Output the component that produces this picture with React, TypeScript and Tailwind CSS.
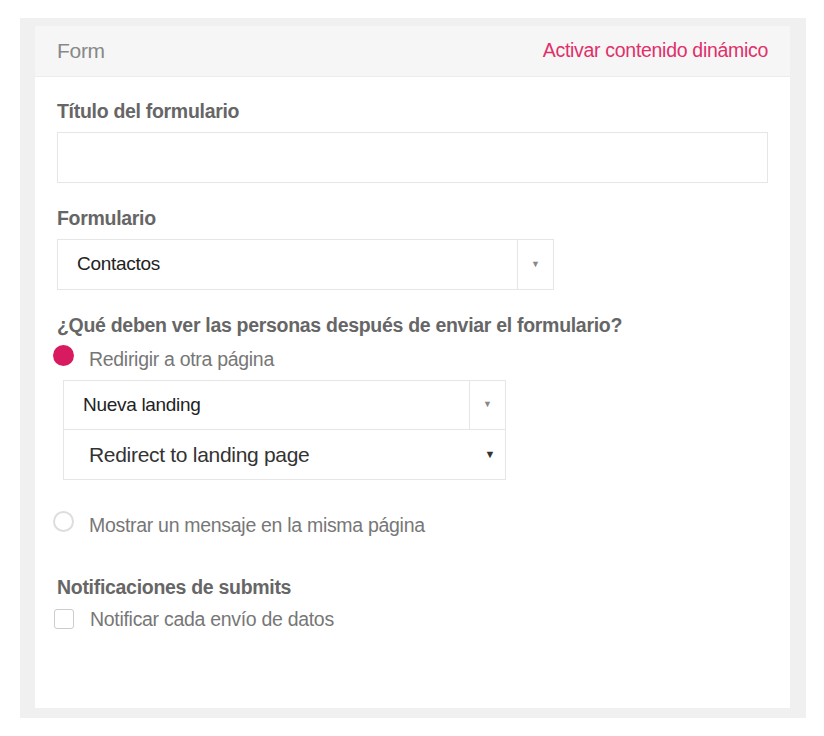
export default function App() {
  const f = { fontFamily: '"Liberation Sans", Arial, sans-serif' };
  return (
    <div className="w-[824px] h-[736px] bg-white pt-[18px] pl-[20px]" style={f}>
      <div className="w-[786px] h-[700px] bg-[#f0f0f0] pt-[8px] pl-[15px]">
        <div className="w-[755px] h-[682px] bg-white flex flex-col">
          <div className="h-[51px] bg-[#f6f6f6] border-b border-[#ececec] flex items-center justify-between pl-[22px] pr-[22px]">
            <span className="text-[21px] text-[#888] tracking-[-0.3px]">Form</span>
            <span className="text-[19.5px] text-[#e0306a] tracking-[-0.3px]">Activar contenido dinámico</span>
          </div>
          <div className="pl-[22px] pr-[22px]">
            <div className="mt-[23px] text-[19.5px] leading-[22px] font-bold text-[#666] tracking-[-0.3px]">Título del formulario</div>
            <div className="mt-[10px] h-[51px] border border-[#e6e6e6]" />
            <div className="mt-[24px] text-[19.5px] leading-[22px] font-bold text-[#666] tracking-[-0.3px]">Formulario</div>
            <div className="mt-[10px] w-[497px] h-[51px] border border-[#e6e6e6] flex">
              <div className="flex-1 flex items-center pl-[19px] text-[19px] text-[#222] tracking-[-0.3px]">Contactos</div>
              <div className="w-[36px] border-l border-[#e6e6e6] flex items-center justify-center text-[9px] text-[#888]">▼</div>
            </div>
            <div className="mt-[24px] text-[19.5px] leading-[22px] font-bold text-[#666] tracking-[-0.3px]">¿Qué deben ver las personas después de enviar el formulario?</div>
            <div className="mt-[12px] flex items-center -ml-[4px]">
              <div className="w-[21px] h-[21px] rounded-full bg-[#d81b60] -mt-[8px]" />
              <span className="ml-[15px] text-[19.5px] leading-[22px] text-[#777] tracking-[-0.3px]">Redirigir a otra página</span>
            </div>
            <div className="mt-[10px] ml-[6px] w-[443px]">
              <div className="h-[50px] border border-[#e6e6e6] flex">
                <div className="flex-1 flex items-center pl-[19px] text-[19px] text-[#222] tracking-[-0.3px]">Nueva landing</div>
                <div className="w-[36px] border-l border-[#e6e6e6] flex items-center justify-center text-[9px] text-[#888]">▼</div>
              </div>
              <div className="h-[50px] border border-t-0 border-[#e6e6e6] flex items-center justify-between pl-[25px] pr-[10px] text-[21px] text-[#333] tracking-[-0.3px]">
                <span>Redirect to landing page</span>
                <span className="text-[11px] text-[#333]">▼</span>
              </div>
            </div>
            <div className="mt-[34px] flex items-center -ml-[4px]">
              <div className="w-[21px] h-[21px] rounded-full border-2 border-[#ddd] -mt-[8px]" />
              <span className="ml-[15px] text-[19.5px] leading-[22px] text-[#777] tracking-[-0.3px]">Mostrar un mensaje en la misma página</span>
            </div>
            <div className="mt-[40px] text-[19.5px] leading-[22px] font-bold text-[#666] tracking-[-0.3px]">Notificaciones de submits</div>
            <div className="mt-[10px] flex items-center -ml-[3px]">
              <div className="w-[20px] h-[20px] rounded-[3px] border border-[#ccc]" />
              <span className="ml-[16px] text-[19.5px] leading-[22px] text-[#777] tracking-[-0.3px]">Notificar cada envío de datos</span>
            </div>
          </div>
        </div>
      </div>
    </div>
  );
}
